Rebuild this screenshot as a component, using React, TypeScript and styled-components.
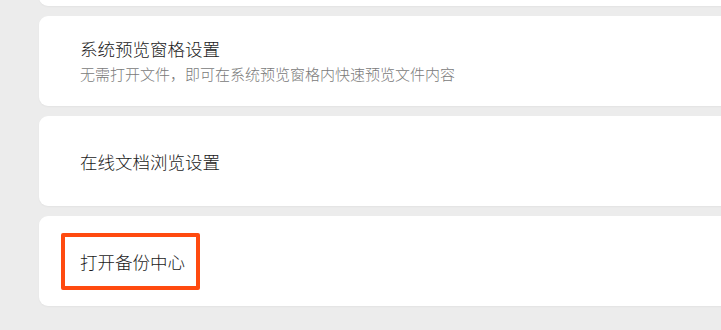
import React from "react";
import styled, { createGlobalStyle } from "styled-components";

const GlobalStyle = createGlobalStyle`
  html, body {
    margin: 0;
    padding: 0;
    background: #ececec;
    overflow: hidden;
  }
  body {
    font-family: "Noto Sans CJK SC", "Noto Sans", sans-serif;
  }
`;

const Page = styled.div`
  width: 721px;
  height: 330px;
  overflow: hidden;
  padding-left: 39px;
  box-sizing: border-box;
`;

// the list is scrolled, so the first card only peeks in at the top
const List = styled.div`
  display: flex;
  flex-direction: column;
  gap: 10px;
  margin-top: -84px;
`;

const Card = styled.div`
  width: 720px;
  height: 90px;
  background: #ffffff;
  border-radius: 9px;
  box-shadow: 0 1px 2px rgba(0, 0, 0, 0.04);
  display: flex;
  flex-direction: column;
  justify-content: center;
  padding-left: 41px;
  box-sizing: border-box;
`;

const Title = styled.div<{ $marked?: boolean }>`
  position: relative;
  align-self: flex-start;
  font-size: 17.5px;
  font-weight: 300;
  line-height: 25px;
  color: #1a1a1a;

  ${(p) =>
    p.$marked &&
    `
    &::after {
      content: "";
      position: absolute;
      top: -16px;
      bottom: -16px;
      left: -19px;
      right: -15px;
      border: 4px solid #ff4a0f;
      border-radius: 2px;
    }
  `}
`;

const Desc = styled.div`
  font-size: 15px;
  font-weight: 300;
  line-height: 25px;
  color: #7a7a7a;
`;

type Item = { title: string; desc?: string; marked?: boolean };

const items: Item[] = [
  { title: "" },
  { title: "系统预览窗格设置", desc: "无需打开文件，即可在系统预览窗格内快速预览文件内容" },
  { title: "在线文档浏览设置" },
  { title: "打开备份中心", marked: true },
];

export default function App() {
  return (
    <>
      <GlobalStyle />
      <Page>
        <List>
          {items.map((item, i) => (
            <Card key={i}>
              {item.title && <Title $marked={item.marked}>{item.title}</Title>}
              {item.desc && <Desc>{item.desc}</Desc>}
            </Card>
          ))}
        </List>
      </Page>
    </>
  );
}
